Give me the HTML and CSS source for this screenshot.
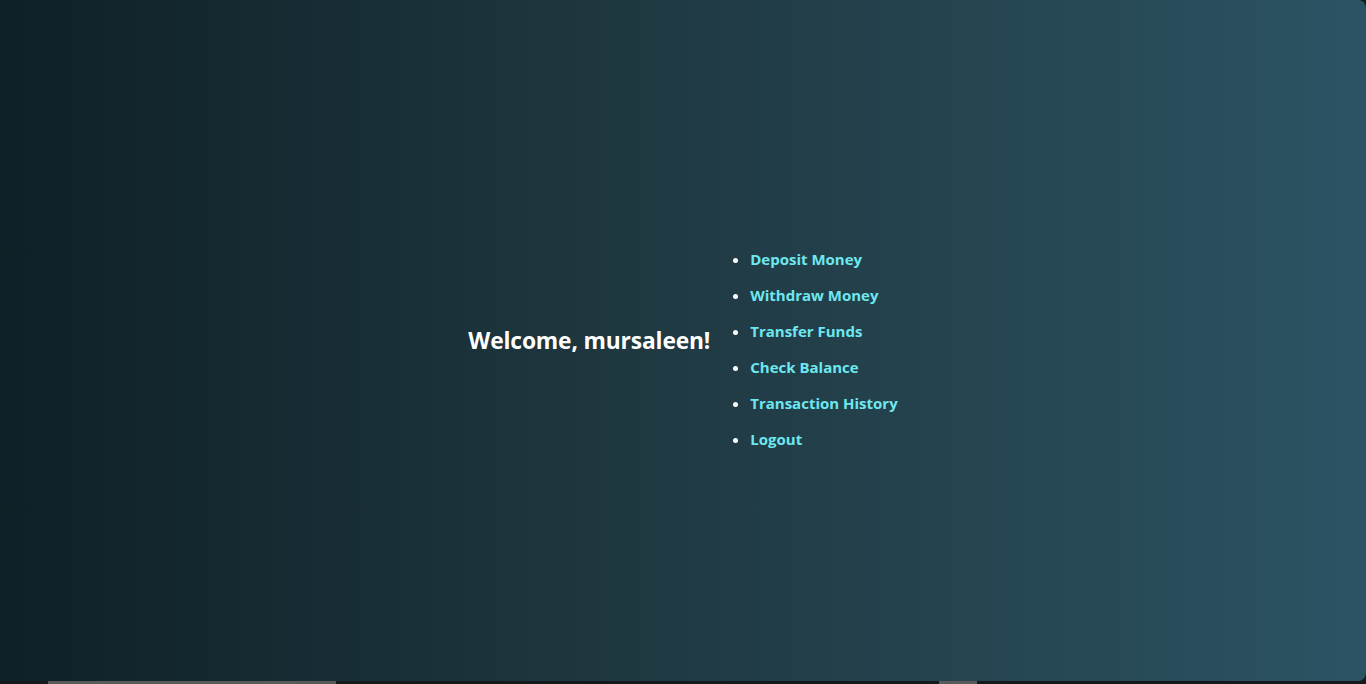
FILE: index.html
```html
<!DOCTYPE html>
<html lang="en">
<head>
<meta charset="utf-8">
<title>Dashboard</title>
<link rel="stylesheet" href="styles.css">
</head>
<body>
<div class="frame">
  <main class="dashboard">
    <h2 class="welcome">Welcome, mursaleen!</h2>
    <ul class="menu">
      <li><a href="#">Deposit Money</a></li>
      <li><a href="#">Withdraw Money</a></li>
      <li><a href="#">Transfer Funds</a></li>
      <li><a href="#">Check Balance</a></li>
      <li><a href="#">Transaction History</a></li>
      <li><a href="#">Logout</a></li>
    </ul>
  </main>
</div>
<div class="scrollbar">
  <span class="thumb thumb-a"></span>
  <span class="thumb thumb-b"></span>
</div>
</body>
</html>
```
FILE: styles.css
```css
html, body {
  margin: 0;
  padding: 0;
  height: 100%;
  overflow: hidden;
}
body {
  background: #141a1c;
  font-family: "Open Sans", "Noto Sans", sans-serif;
}
.frame {
  height: 681px;
  background: linear-gradient(to right, #0f2027, #203a43, #2c5364);
  border-radius: 0 8px 8px 0;
  display: flex;
  align-items: center;
  justify-content: center;
}
.dashboard {
  display: flex;
  align-items: center;
}
.welcome {
  margin: 0;
  color: #ffffff;
  font-size: 22.8px;
  font-weight: 700;
  letter-spacing: -0.15px;
}
.menu {
  margin: 2px 0 0;
  padding-left: 40px;
  color: #ffffff;
  list-style: disc;
}
.menu li {
  font-size: 15px;
  line-height: 21px;
  margin-top: 15px;
}
.menu a {
  color: #6ee7ef;
  font-weight: 700;
  text-decoration: none;
}
.scrollbar {
  height: 3px;
  position: relative;
}
.thumb {
  position: absolute;
  top: 0;
  height: 3px;
  background: #5a5a5a;
}
.thumb-a { left: 48px; width: 288px; }
.thumb-b { left: 939px; width: 38px; }
```
